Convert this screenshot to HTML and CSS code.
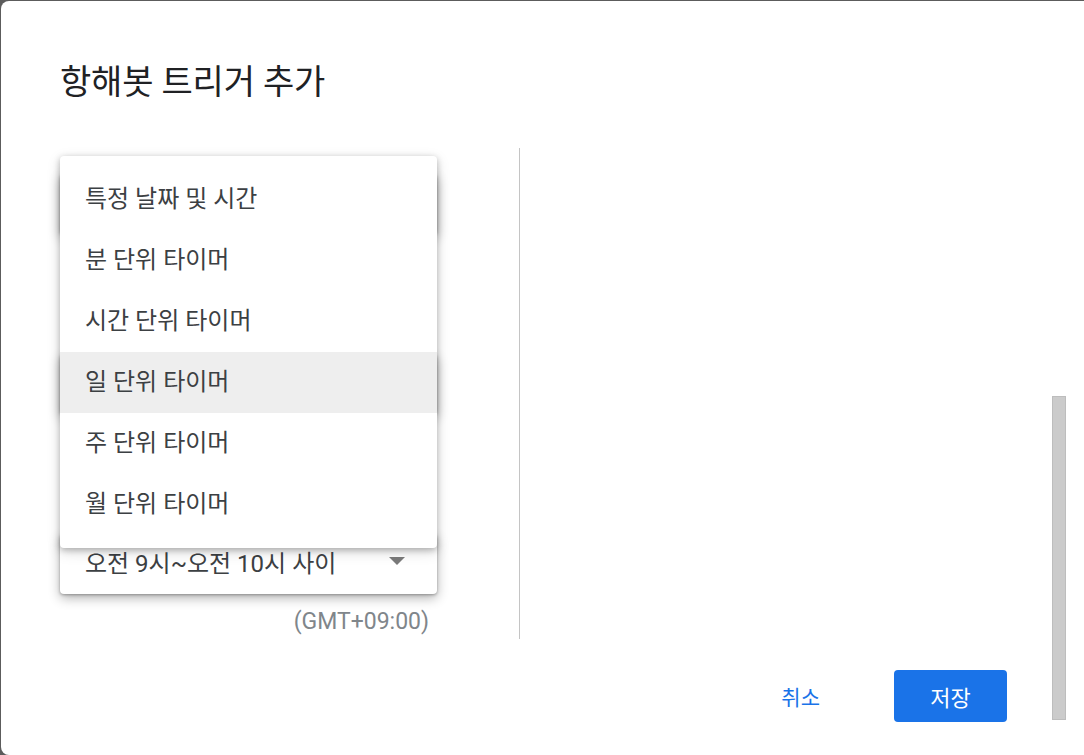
FILE: index.html
```html
<!DOCTYPE html>
<html lang="ko">
<head>
<meta charset="utf-8">
<link rel="stylesheet" href="styles.css">
</head>
<body>
<div class="dialog">
  <h1 class="title">항해봇 트리거 추가</h1>
  <div class="content">
    <div class="left">
      <div class="select s1"><span></span><i class="arrow"></i></div>
      <div class="select s2"><span></span><i class="arrow"></i></div>
      <div class="select s3"><span>오전 9시~오전 10시 사이</span><i class="arrow"></i></div>
      <div class="tz">(GMT+09:00)</div>
      <ul class="menu">
        <li>특정 날짜 및 시간</li>
        <li>분 단위 타이머</li>
        <li>시간 단위 타이머</li>
        <li class="active">일 단위 타이머</li>
        <li>주 단위 타이머</li>
        <li>월 단위 타이머</li>
      </ul>
    </div>
    <div class="divider"></div>
    <div class="right"></div>
  </div>
  <div class="footer">
    <button class="btn cancel">취소</button>
    <button class="btn save">저장</button>
  </div>
  <div class="scrollbar"></div>
</div>
</body>
</html>
```
FILE: styles.css
```css
html, body {
  margin: 0;
  padding: 0;
  height: 100%;
  overflow: hidden;
}
body {
  background: #5c5c5c;
  font-family: Roboto, "Noto Sans CJK KR", "Noto Sans", sans-serif;
}
.dialog {
  position: relative;
  margin: 1px 0 0 1px;
  width: 1083px;
  height: 754px;
  background: #fff;
  border-radius: 8px 0 0 8px;
  box-sizing: border-box;
  padding: 0 0 0 59px;
}
.title {
  margin: 0;
  padding-top: 61px;
  height: 86px;
  box-sizing: border-box;
  font-size: 34px;
  line-height: 40px;
  font-weight: 400;
  color: #202124;
  letter-spacing: -0.2px;
}
.content {
  display: flex;
  margin-top: 61px;
  height: 491px;
}
.left {
  position: relative;
  width: 377px;
  display: flex;
  flex-direction: column;
}
.select {
  height: 60px;
  box-sizing: border-box;
  background: #fff;
  border-radius: 4px;
  box-shadow: 0 1px 3px rgba(0,0,0,0.3), 0 4px 12px rgba(0,0,0,0.3);
  display: flex;
  align-items: center;
  justify-content: space-between;
  padding: 0 32px 6px 25px;
  font-size: 24px;
  color: #3c4043;
}
.s1 { margin-top: 26px; }
.s2 { margin-top: 120px; }
.s3 { margin-top: 120px; }
.arrow {
  width: 0;
  height: 0;
  border-left: 8px solid transparent;
  border-right: 8px solid transparent;
  border-top: 8px solid #7a7a7a;
}
.tz {
  margin-top: 14px;
  text-align: right;
  padding-right: 8px;
  font-size: 23px;
  line-height: 28px;
  color: #80868b;
}
.menu {
  position: absolute;
  top: 8px;
  left: 0;
  width: 377px;
  margin: 0;
  padding: 13px 0;
  list-style: none;
  background: #fff;
  border-radius: 4px;
  box-shadow: 0 2px 6px rgba(0,0,0,0.25), 0 4px 14px rgba(0,0,0,0.15);
}
.menu li {
  height: 61px;
  display: flex;
  align-items: center;
  padding: 0 0 6px 25px;
  box-sizing: border-box;
  font-size: 24px;
  color: #3c4043;
}
.menu li.active {
  background: #eeeeee;
}
.divider {
  width: 1px;
  margin-left: 82px;
  background: #c4c4c4;
}
.right {
  flex: 1;
}
.footer {
  display: flex;
  justify-content: flex-end;
  align-items: center;
  gap: 50px;
  margin-top: 31px;
  padding-right: 77px;
}
.btn {
  font-family: inherit;
  border: none;
  border-radius: 4px;
  cursor: pointer;
}
.cancel {
  background: transparent;
  color: #1a73e8;
  padding: 0 24px;
  height: 52px;
  font-size: 21px;
}
.save {
  width: 113px;
  height: 52px;
  background: #1a73e8;
  color: #fff;
  font-size: 22px;
}
.scrollbar {
  position: absolute;
  left: 1051px;
  top: 395px;
  width: 12px;
  height: 322px;
  background: #cbcbcb;
  border: 1px solid #bdbdbd;
}
```
